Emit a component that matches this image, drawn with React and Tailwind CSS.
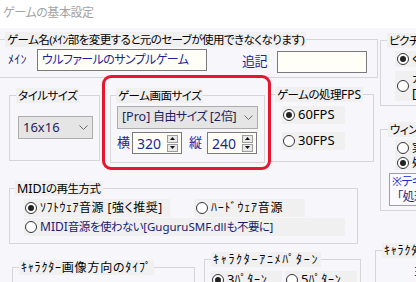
import React from "react"

const Group = ({ className, children }) => (
  <div className={`relative shrink-0 border border-[#d6d6d6] ${className}`}>{children}</div>
)

const Legend = ({ className, children }) => (
  <span className={`absolute top-[-8px] h-[15px] leading-[15px] px-[2px] bg-[#f0f0f0] whitespace-nowrap ${className}`}>
    {children}
  </span>
)

// latin runs are set a bit larger, like the original UI font
const L = ({ className = "text-[13px]", children }) => (
  <span className={`tracking-normal ${className}`}>{children}</span>
)

const Radio = ({ on }) => (
  <span className="w-[12px] h-[12px] shrink-0 rounded-full border border-[#333] bg-white flex items-center justify-center">
    {on && <span className="w-[6px] h-[6px] rounded-full bg-[#222]" />}
  </span>
)

const Opt = ({ on, className, children }) => (
  <div className={`flex items-center pl-[1px] bg-[#f0f0f0] whitespace-nowrap overflow-hidden shrink-0 ${className}`}>
    <Radio on={on} />
    <span className="ml-[3px]">{children}</span>
  </div>
)

const Chevron = () => (
  <svg width="9" height="6" viewBox="0 0 9 6" className="shrink-0">
    <polyline points="0.5,0.5 4.5,4.5 8.5,0.5" fill="none" stroke="#6a6a6a" strokeWidth="1" />
  </svg>
)

const SpinBtn = ({ up }) => (
  <div className="w-[11px] h-[8px] border border-[#9c9c9c] bg-[#e9e9e9] flex items-center justify-center">
    <svg width="5" height="3" viewBox="0 0 5 3">
      <polygon points={up ? "2.5,0 5,3 0,3" : "0,0 5,0 2.5,3"} fill="#111" />
    </svg>
  </div>
)

const Spin = ({ value }) => (
  <div className="w-[50px] h-[22px] border border-[#7a7a7a] bg-[#fffff8] flex items-center shrink-0">
    <span className="flex-1 pl-[4px] text-[14px] tracking-normal text-[#1f1f9a]">{value}</span>
    <div className="flex flex-col gap-[1px] mr-[3px]">
      <SpinBtn up />
      <SpinBtn />
    </div>
  </div>
)

export default function App() {
  return (
    <div className="relative w-[416px] h-[282px] overflow-hidden bg-[#f7f7fb] text-[11.5px] tracking-[-0.5px] text-black font-['Noto_Sans','Noto_Sans_CJK_JP',sans-serif] [font-feature-settings:'palt']">
      <div className="h-[28px] bg-white pl-[3px] pt-[3px] leading-[20px] text-[12px] tracking-[-0.4px] text-[#a3a3a3]">ゲームの基本設定</div>

      <div className="flex">
        {/* left column */}
        <div className="w-[378px] shrink-0">
          <Group className="ml-[-1px] mt-[11px] w-[379px] h-[39px] flex items-start pt-[9px]">
            <Legend className="left-[5px] text-[11.5px] tracking-[-0.55px]">ゲーム名(ﾒｲﾝ部を変更すると元のセーブが使用できなくなります)</Legend>
            <span className="ml-[8px] w-[29px] h-[22px] leading-[22px] text-[12px] tracking-[0.3px] text-[#1c1c6c]">ﾒｲﾝ</span>
            <div className="w-[170px] h-[22px] border border-[#7a7a7a] bg-[#fffff8] pl-[4px] leading-[20px] text-[12px] tracking-[-0.6px] text-[#1f1f9a] whitespace-nowrap">
              ウルファールのサンプルゲーム
            </div>
            <span className="ml-[35px] w-[35px] h-[22px] leading-[24px] text-[13px] text-[#24249a]">追記</span>
            <div className="mt-[2px] w-[90px] h-[22px] border border-[#7a7a7a] bg-[#fffff8]" />
          </Group>

          <div className="flex items-start">
            <Group className="ml-[9px] mt-[17px] w-[91px] h-[66px] pl-[8px] pt-[20px]">
              <Legend className="left-[6px]">タイルサイズ</Legend>
              <div className="w-[75px] h-[23px] border border-[#adadad] bg-[#e5e5e5] flex items-center pl-[4px] pr-[4px] text-[#1e1e5e]">
                <L className="flex-1 text-[13px]">16x16</L>
                <Chevron />
              </div>
            </Group>

            <Group className="ml-[10px] mt-[17px] w-[155px] h-[68px] pl-[6px] pt-[10px]">
              <Legend className="left-[5px]">ゲーム画面サイズ</Legend>
              <div className="w-[141px] h-[23px] border border-[#adadad] bg-[#e5e5e5] flex items-center pl-[4px] pr-[4px] text-[#1e1e5e] whitespace-nowrap">
                <span className="flex-1 text-[12px]"><L className="text-[12.5px]">[Pro]</L> 自由サイズ <L className="text-[12.5px]">[2</L>倍<L className="text-[12.5px]">]</L></span>
                <Chevron />
              </div>
              <div className="mt-[3px] flex items-center">
                <span className="w-[15px] text-[13px] text-[#24249a]">横</span>
                <Spin value="320" />
                <span className="ml-[7px] w-[18px] text-[13px] text-[#24249a]">縦</span>
                <Spin value="240" />
              </div>
            </Group>

            <Group className="ml-[4px] mt-[16px] w-[105px] h-[68px] pl-[12px] pt-[11px]">
              <Legend className="left-[5px]">ゲームの処理<L className="text-[12px]">FPS</L></Legend>
              <Opt on className="w-[63px] h-[18px]"><L>60FPS</L></Opt>
              <Opt className="mt-[8px] w-[63px] h-[18px]"><L>30FPS</L></Opt>
            </Group>
          </div>

          <Group className="ml-[9px] mt-[25px] w-[349px] h-[56px] pl-[14px] pt-[10px]">
            <Legend className="left-[5px]"><L className="text-[12.5px]">MIDI</L>の再生方式</Legend>
            <div className="flex">
              <Opt on className="w-[146px] h-[18px] text-[12px] tracking-[0.5px]">ｿﾌﾄｳｪｱ音源 [強く推奨]</Opt>
              <Opt className="ml-[25px] w-[110px] h-[18px] text-[12px] tracking-[0.8px]">ﾊｰﾄﾞｳｪｱ音源</Opt>
            </div>
            <Opt className="mt-[1px] w-[321px] h-[18px] text-[#1a1a70]">
              <L className="text-[12px]">MIDI</L>音源を使わない<L className="text-[11.5px]">[GuguruSMF.dll</L>も不要に<L className="text-[11.5px]">]</L>
            </Opt>
          </Group>

          <div className="flex items-start">
            <Group className="ml-[12px] mt-[23px] w-[183px] h-[60px]">
              <Legend className="left-[6px] text-[12px] tracking-[0.8px]">ｷｬﾗｸﾀｰ画像方向のﾀｲﾌﾟ</Legend>
            </Group>
            <Group className="ml-[9px] mt-[15px] w-[157px] h-[60px] pl-[6px] pt-[11px] flex items-start">
              <Legend className="left-[6px] text-[12px] tracking-[1.7px]">ｷｬﾗｸﾀｰｱﾆﾒﾊﾟﾀｰﾝ</Legend>
              <Opt on className="w-[71px] h-[18px] text-[12px] tracking-[0.8px]"><L>3</L>ﾊﾟﾀｰﾝ</Opt>
              <Opt className="ml-[3px] w-[72px] h-[18px] text-[12px] tracking-[0.8px]"><L>5</L>ﾊﾟﾀｰﾝ</Opt>
            </Group>
          </div>
        </div>

        {/* right column */}
        <div className="flex flex-col">
          <Group className="ml-[2px] mt-[12px] w-[60px] h-[66px] pl-[14px] pt-[10px]">
            <Legend className="left-[6px]">ピクチャの拡大縮小</Legend>
            <Opt on className="w-[60px] h-[16px] pl-[2px]">くっきり</Opt>
            <Opt className="mt-[4px] w-[60px] h-[30px] pl-[2px]">
              <span className="block leading-[14px]">カクカクさせない<br /><L>[Pro]</L></span>
            </Opt>
          </Group>

          <Group className="ml-[2px] mt-[23px] w-[60px] h-[82px] pt-[10px]">
            <Legend className="left-[7px]">ウィンドウサイズ</Legend>
            <div className="pl-[14px]">
              <Opt className="w-[60px] h-[15px] pl-[2px]">実際の画面</Opt>
              <Opt on className="w-[60px] h-[15px] pl-[2px]">処理画面</Opt>
            </div>
            <div className="ml-[8px] mt-[3px] h-[33px] border border-[#a0a0a0] bg-[#fbfbff] pl-[2px] leading-[15px] text-[12px] whitespace-nowrap overflow-hidden">
              <div className="text-[#2727d6]">※テキスト</div>
              <div className="pl-[5px] text-[#1a1a80]">「処理</div>
            </div>
          </Group>

          <Group className="ml-[-3px] mt-[39px] w-[60px] h-[60px] pl-[37px] pt-[11px]">
            <Legend className="left-[6px] text-[12px] tracking-[0.8px]">ｷｬﾗｸﾀｰ</Legend>
            <span className="text-[13px] text-[#2727d6] whitespace-nowrap">ヨコ</span>
          </Group>
        </div>
      </div>

      <div className="absolute left-[102px] top-[75px] w-[169px] h-[95px] border-[3px] border-[#e5162e] rounded-[9px]" />
    </div>
  )
}
